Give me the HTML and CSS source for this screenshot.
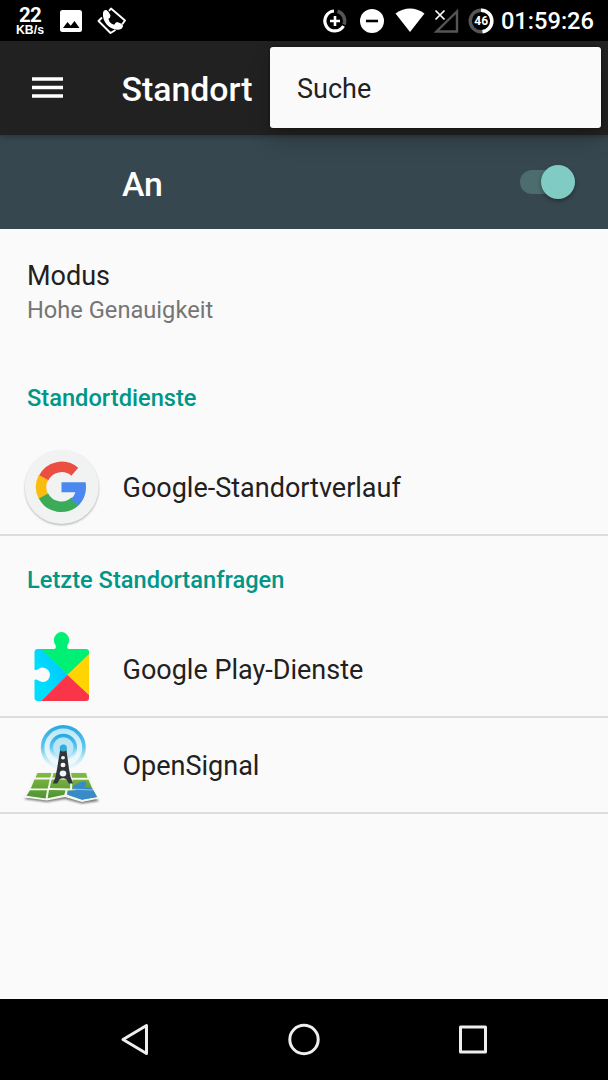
FILE: index.html
```html
<!DOCTYPE html>
<html lang="de">
<head>
<meta charset="utf-8">
<title>Standort</title>
<link rel="stylesheet" href="styles.css">
</head>
<body>
<div class="screen">
  <header class="status">
    <div class="speed"><span class="speed-value">22</span><span class="speed-unit">KB/s</span></div>
    <svg class="status-image" width="22" height="22" viewBox="0 0 22 22"><rect width="22" height="22" rx="2.500" fill="#fff"/><path d="M3 18 7.500 12l3.200 3.700L14.500 11 19.500 18z" fill="#000"/></svg>
    <svg class="status-call" width="30" height="28" viewBox="0 0 30 28">
      <path d="M12 3.800 14 1.500 28 13.500l-3 4M5 10.500 1.500 14 13.500 26l5-3" fill="none" stroke="#fff" stroke-width="1.900" stroke-linejoin="round"/>
      <path d="M6 6Q6.500 2.500 9.500 3Q12.500 5 13.500 8.500Q13.500 11 11.500 11.500C12 15 14.500 17.500 17.500 17.500Q18 15.500 20 15Q24 15.500 26 18.500Q26 21.500 22.500 22.500C14 24 5 16 6 6z" fill="#fff"/>
    </svg>
    <div class="status-right">
      <svg width="26" height="26" viewBox="0 0 26 26" fill="none"><path d="M15.500 3.300A10 10 0 0 1 22 16.500" stroke="#555" stroke-width="3.500"/><path d="M12 3A10 10 0 1 0 21.500 18" stroke="#fff" stroke-width="3.200"/><path d="M13 8v10M8 13h10" stroke="#fff" stroke-width="2.600"/></svg>
      <svg class="dnd" width="24" height="24" viewBox="0 0 24 24"><circle cx="12" cy="12" r="12" fill="#fff"/><path d="M6 12h12" stroke="#000" stroke-width="2.600"/></svg>
      <svg class="wifi" width="30" height="25" viewBox="0 0 30 25"><path d="M.5 5.500Q15-4.500 29.500 5.500L15 24z" fill="#fff"/></svg>
      <svg class="signal" width="25" height="24" viewBox="0 0 25 24"><path d="M2.500 22.500h20.500V2.500z" fill="none" stroke="#555" stroke-width="2.400"/><path d="M1.500 1.500l9 9m0-9-9 9" stroke="#fff" stroke-width="1.700"/></svg>
      <svg class="battery" width="26" height="26" viewBox="0 0 26 26"><circle cx="13" cy="13" r="10.800" fill="none" stroke="#555" stroke-width="3.400"/><path d="M13 2.200a10.800 10.800 0 0 1 1.500 21.500" fill="none" stroke="#fff" stroke-width="3.400"/><text x="13.200" y="17.300" text-anchor="middle" class="battery-text">46</text></svg>
      <span class="time">01:59:26</span>
    </div>
  </header>
  <div class="toolbar">
    <svg class="menu-icon" width="31" height="21" viewBox="0 0 31 21"><path d="M0 2h31M0 10.500h31M0 19h31" stroke="#fff" stroke-width="3.400"/></svg>
    <h1 class="title">Standort</h1>
    <div class="popup">Suche</div>
  </div>
  <div class="switch-bar">
    <span class="switch-label">An</span>
    <div class="switch"><div class="thumb"></div></div>
  </div>
  <main class="content">
    <section class="mode">
      <div class="mode-title">Modus</div>
      <div class="mode-sub">Hohe Genauigkeit</div>
    </section>
    <h2 class="category">Standortdienste</h2>
    <div class="row">
      <svg class="app-icon" width="84" height="84" viewBox="20 445 84 84">
        <defs><filter id="soft" x="-20%" y="-20%" width="140%" height="150%"><feGaussianBlur stdDeviation="1"/></filter></defs>
        <circle cx="61.800" cy="488.300" r="36.800" fill="#777" opacity=".6" filter="url(#soft)"/>
        <circle cx="61.700" cy="487" r="37" fill="#f1f2f2"/>
        <g fill="none" stroke-width="10.500">
          <path d="M43.500 478.300A20.200 20.200 0 0 1 74.800 471.700" stroke="#ea4f42"/>
          <path d="M43.500 496.500A20.200 20.200 0 0 1 43.500 477.500" stroke="#fbbc12"/>
          <path d="M75 501.500A20.200 20.200 0 0 1 43.500 496" stroke="#3cab58"/>
        </g>
        <path d="M61.500 482.300H85.600C87.100 490.700 84.600 499.500 78.600 505.500L70.600 499.300Q74.200 496.800 75.400 492.200H61.500z" fill="#4a88f0"/>
      </svg>
      <span class="row-label">Google-Standortverlauf</span>
    </div>
    <h2 class="category category-next">Letzte Standortanfragen</h2>
    <div class="row">
      <svg class="app-icon" width="84" height="84" viewBox="20 627 84 84">
        <defs>
          <clipPath id="puzzle"><path d="M38 649h16.500q2-.5 1-4A7.600 8 0 1 1 67.500 645q-1 3.500 1 4H86q3 0 3 3v46q0 3-3 3H38q-3.500 0-3.500-3V680q1-1.500 4 .6A7.200 7.200 0 1 0 38.500 669q-3 2-4 .5V652q0-3 3.500-3z"/></clipPath>
          <linearGradient id="blue" x1="0" y1="1" x2="1" y2="0"><stop offset=".3" stop-color="#00ddff"/><stop offset="1" stop-color="#00b8ff"/></linearGradient>
        </defs>
        <g clip-path="url(#puzzle)">
          <path d="M34 630v72h6l28-27-27-27z" fill="url(#blue)"/>
          <path d="M40 648V630h50v24L67.500 675z" fill="#00f076"/>
          <path d="M90 653v43L67.500 675z" fill="#ffd400"/>
          <path d="M40 702 67.500 675 90 696v6z" fill="#fa3549"/>
        </g>
      </svg>
      <span class="row-label">Google Play-Dienste</span>
    </div>
    <div class="row">
      <svg class="app-icon" width="84" height="84" viewBox="20 723 84 84">
        <defs>
          <linearGradient id="wave" x1="0" y1="0" x2="0" y2="1"><stop offset="0" stop-color="#2aaae4"/><stop offset=".5" stop-color="#62c8ee"/><stop offset="1" stop-color="#c8f0fa" stop-opacity=".25"/></linearGradient>
          <linearGradient id="halo" x1="0" y1="0" x2="0" y2="1"><stop offset="0" stop-color="#b5e6f7"/><stop offset="1" stop-color="#e8f8fd" stop-opacity=".3"/></linearGradient>
          <linearGradient id="land" x1="0" y1="0" x2="0" y2="1"><stop offset="0" stop-color="#83ba42"/><stop offset="1" stop-color="#4c922f"/></linearGradient>
          <filter id="mapshadow"><feGaussianBlur stdDeviation="1"/></filter>
        </defs>
        <path d="M24 799 47 802 65 799 82 803.500 99 801 92 795H30z" fill="#555" opacity=".8" filter="url(#mapshadow)"/>
        <path d="M36 772H87.500L98.800 798.500 82 802 65 797 47 800.500 24 797.500z" fill="#f4f6f1"/>
        <path d="M37.500 773H51.500L50.300 777.500H35.500zM53.500 773H69L70 777.500H52.200zM71 773H86L87.500 777.700H72zM34.500 779.500H49.700L47.700 788.500H30.800zM51.700 779.500H70.500L70 788.500 49.700 788zM72.500 779.800H88.500L92.500 789H72zM30 790.300H47L45.600 798.500 26.500 795.800zM49 790 65.500 790.300 64.300 794.800 47.600 798.300zM67.500 790.500H93.500L97 797 82 799.500 67 794.500z" fill="url(#land)"/>
        <path d="M72.500 788q1.500-3.500 5-4 2-3 8-2.500 2 3-1 5.500l7.500 1 5 9-15 2.700-14.500-5 1-4 8-.5z" fill="#388bc8"/>
        <path d="M72 789.200l21 .8" stroke="#8fc4e4" stroke-width="1"/>
        <circle cx="63.300" cy="747.500" r="19.500" fill="url(#halo)"/>
        <circle cx="63.300" cy="747.500" r="20.700" fill="none" stroke="url(#wave)" stroke-width="3.600"/>
        <circle cx="63.300" cy="747.500" r="12" fill="#a9e0f5" fill-opacity=".65" stroke="url(#wave)" stroke-width="3.600"/>
        <path d="M60.300 749h6L69 769q1 8 4 14.500h-4.200l-2.300-4q-3.500-2.500-7 0l-2.300 4H53q3-6.500 4-14.500z" fill="#303539"/>
        <g fill="#f4f6f7"><ellipse cx="63" cy="757.700" rx="2" ry="1.700"/><ellipse cx="63" cy="765" rx="2.500" ry="2.200"/><ellipse cx="63" cy="773.500" rx="3.300" ry="2.900"/></g>
        <circle cx="63.300" cy="748" r="3.600" fill="#35abd9"/>
      </svg>
      <span class="row-label">OpenSignal</span>
    </div>
  </main>
  <nav class="nav">
    <svg width="30" height="34" viewBox="0 0 30 34"><path d="M3 16.500 26.500 2.500v28z"/></svg>
    <svg width="34" height="34" viewBox="0 0 34 34"><circle cx="17" cy="16.500" r="14.200"/></svg>
    <svg width="30" height="30" viewBox="0 0 30 30"><rect x="2.500" y="2" width="25" height="25"/></svg>
  </nav>
</div>
</body>
</html>
```

FILE: styles.css
```css
* { box-sizing: border-box; }
body { margin: 0; font-family: Roboto, "Liberation Sans", sans-serif; color: #212121; background: #fafafa; }
svg { display: block; flex: none; }
.screen { width: 608px; height: 1080px; display: flex; flex-direction: column; overflow: hidden; }
.status { height: 41px; flex: none; background: #000; color: #fff; display: flex; align-items: center; padding: 0 14px 0 15px; }
.speed { width: 30px; display: flex; flex-direction: column; align-items: center; font-weight: 700; }
.speed-value { font-size: 20.500px; line-height: 18px; letter-spacing: -0.8px; }
.speed-unit { font-family: "Liberation Sans", sans-serif; font-size: 12.300px; line-height: 12px; }
.status-image { margin-left: 15px; }
.status-call { margin-left: 15px; }
.status-right { margin-left: auto; display: flex; align-items: center; }
.dnd { margin-left: 12px; }
.wifi { margin-left: 11px; }
.signal { margin-left: 9px; }
.battery { margin-left: 9px; overflow: visible; }
.battery-text { font: 700 12px Roboto, sans-serif; fill: #fff; }
.time { margin-left: 7px; font-size: 23.650px; font-weight: 500; line-height: 30px; padding-top: 1px; }
.toolbar { position: relative; z-index: 1; height: 94px; flex: none; background: #212121; display: flex; align-items: center; padding-left: 32px; box-shadow: 0 1px 6px rgba(0,0,0,.35); }
.menu-icon { margin-bottom: 1px; }
.title { margin: 3px 0 0 58.500px; font-size: 33.800px; font-weight: 500; color: #fff; line-height: 40px; }
.popup { position: absolute; top: 6px; left: 270px; width: 331px; height: 81px; padding-left: 27px; line-height: 84px; font-size: 27px; background: #fafafa; border-radius: 3px; box-shadow: 0 0 3px rgba(0,0,0,.5), 0 12px 22px rgba(0,0,0,.18); }
.switch-bar { height: 94px; flex: none; background: #37474f; display: flex; align-items: center; justify-content: space-between; padding: 0 33px 0 122px; }
.switch-label { color: #fff; font-size: 33.800px; font-weight: 500; padding-top: 5px; }
.switch { width: 55px; height: 24px; border-radius: 12px; background: #4c6c6e; display: flex; align-items: center; justify-content: flex-end; }
.thumb { width: 34px; height: 34px; border-radius: 50%; background: #80cbc4; box-shadow: 0 2px 4px rgba(0,0,0,.35); }
.content { flex: 1; background: #fafafa; }
.mode { height: 124px; padding: 31px 27px 0; }
.mode-title { font-size: 27px; line-height: 32px; }
.mode-sub { font-size: 23.650px; line-height: 28px; margin-top: 4px; color: #757575; }
.category { margin: 0; height: 87px; padding: 31px 27px 0; font-size: 23.650px; font-weight: 500; line-height: 28px; color: #009688; }
.category-next { height: 86px; padding-top: 30px; }
.row { height: 96px; display: flex; align-items: center; padding-left: 20px; gap: 18.500px; font-size: 27px; border-bottom: 2px solid #dcdcdc; }
.row-label { padding-top: 2px; }
.nav { height: 81px; flex: none; background: #000; display: flex; align-items: center; justify-content: space-between; padding: 0 120px; }
.nav svg { fill: none; stroke: #eee; stroke-width: 3; stroke-linejoin: round; }
```
